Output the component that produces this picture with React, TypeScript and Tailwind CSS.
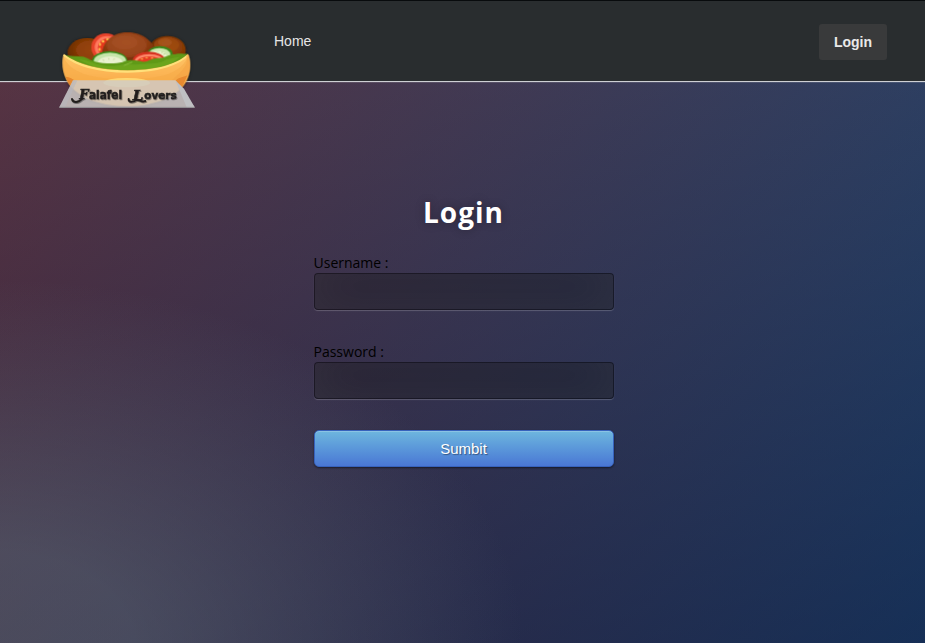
import React from 'react';

function Logo() {
  return (
    <svg className="block h-[95px] w-[155px]" viewBox="0 0 465 285" role="img" aria-label="Falafel Lovers">
      <defs>
        <linearGradient id="pita" x1="0" y1="0" x2="0" y2="1">
          <stop offset="0" stopColor="#ffc568" />
          <stop offset="0.5" stopColor="#fbb04e" />
          <stop offset="1" stopColor="#f09a38" />
        </linearGradient>
        <radialGradient id="ball" cx="0.45" cy="0.35" r="0.7">
          <stop offset="0" stopColor="#a34d22" />
          <stop offset="0.55" stopColor="#913d12" />
          <stop offset="1" stopColor="#6b2c06" />
        </radialGradient>
        <radialGradient id="sideBall" cx="0.6" cy="0.4" r="0.7">
          <stop offset="0" stopColor="#9c4a10" />
          <stop offset="0.5" stopColor="#863a06" />
          <stop offset="1" stopColor="#602800" />
        </radialGradient>
        <filter id="shade" x="-10%" y="-10%" width="120%" height="130%">
          <feDropShadow dx="0" dy="2" stdDeviation="4" floodColor="#000" floodOpacity="0.65" />
        </filter>
        <filter id="ink" x="-5%" y="-20%" width="110%" height="150%">
          <feDropShadow dx="2" dy="3" stdDeviation="2" floodColor="#000" floodOpacity="0.4" />
        </filter>
        <clipPath id="bowl">
          <path d="M41 102 C62 118 116 150 233 151 C340 150 387 126 414 102 C422 120 424 150 410 180 C390 225 320 257 232 258 C138 257 74 225 50 180 C35 150 36 122 41 102Z" />
        </clipPath>
      </defs>
      <g filter="url(#shade)">
        <ellipse cx="112" cy="98" rx="59" ry="44" fill="url(#sideBall)" />
        <ellipse cx="118" cy="90" rx="40" ry="28" fill="#93420e" opacity="0.65" />
        <ellipse cx="352" cy="91" rx="55" ry="43" fill="url(#sideBall)" />
        <ellipse cx="350" cy="74" rx="38" ry="22" fill="#a04b13" opacity="0.7" />
        <ellipse cx="345" cy="67" rx="21" ry="12" fill="#ab5a22" opacity="0.6" />
        <ellipse cx="168" cy="82" rx="44" ry="42" fill="#e9432c" />
        <ellipse cx="171" cy="82" rx="37" ry="34" fill="#ff7a5e" />
        <ellipse cx="176" cy="83" rx="32" ry="29" fill="#e4371f" />
        <g fill="#ffc94f">
          <ellipse cx="150" cy="73" rx="3" ry="5" /><ellipse cx="159" cy="64" rx="4" ry="4" />
          <ellipse cx="173" cy="58" rx="5" ry="3" /><ellipse cx="149" cy="88" rx="3" ry="5" />
        </g>
        <path d="M156 108 C154 68 187 37 232 37 C281 37 312 67 318 101 C300 129 171 130 156 108Z" fill="url(#ball)" />
        <ellipse cx="230" cy="76" rx="60" ry="36" fill="#a04c22" opacity="0.55" />
        <ellipse cx="224" cy="67" rx="39" ry="22" fill="#a85428" opacity="0.45" />
        <ellipse cx="330" cy="102" rx="38" ry="24" fill="#39891b" />
        <ellipse cx="328" cy="104" rx="33" ry="20" fill="#cfe8b0" />
        <ellipse cx="325" cy="107" rx="24" ry="14" fill="#eaf2cd" />
        <path d="M322 95 L326 99 M337 94 L336 99 M346 101 L340 103" stroke="#abc879" strokeWidth="2" />
        <ellipse cx="179" cy="123" rx="53" ry="30" fill="#368b18" />
        <ellipse cx="180" cy="124" rx="49" ry="26" fill="#c6e6aa" />
        <ellipse cx="181" cy="128" rx="37" ry="19" fill="#eaf2d0" />
        <path d="M158 119 L163 122 M176 114 L177 119 M194 115 L190 120" stroke="#b5cd83" strokeWidth="2" />
        <ellipse cx="297" cy="122" rx="49" ry="27" fill="#d5301f" />
        <ellipse cx="298" cy="124" rx="44" ry="22" fill="#ff8a6c" />
        <ellipse cx="298" cy="127" rx="38" ry="18" fill="#e53b23" />
        <g fill="#ffb045">
          <ellipse cx="276" cy="117" rx="4" ry="2" /><ellipse cx="290" cy="113" rx="4" ry="2" />
          <ellipse cx="306" cy="114" rx="4" ry="2" />
        </g>
        <path d="M44 105 C65 109 80 108 99 110 C118 116 132 128 158 129 C184 131 202 130 218 126 C235 118 256 120 276 125 C294 127 304 114 325 114 C345 115 350 103 377 102 C391 100 400 102 413 102 L378 146 L232 164 L104 151Z" fill="#5e9a18" />
        <path d="M84 118 C124 120 138 140 188 138 C215 136 229 129 256 134 C304 130 330 132 348 119 L391 110 L348 143 L244 157 L139 144Z" fill="#77ae25" opacity="0.6" />
        <path d="M222 136 L247 126" stroke="#a3cc55" strokeWidth="3" opacity="0.6" />
        <path d="M41 102 C62 118 116 150 233 151 C340 150 387 126 414 102 C422 120 424 150 410 180 C390 225 320 257 232 258 C138 257 74 225 50 180 C35 150 36 122 41 102Z" fill="url(#pita)" />
      </g>
      <g clipPath="url(#bowl)">
        <path d="M38 103 C54 160 128 178 231 178 C331 178 400 160 416 103 L430 210 L375 236 L240 264 L90 236 L32 171Z" fill="#f6a945" opacity="0.5" />
        <path d="M41 104 C80 138 151 154 233 155 C333 153 389 129 413 105" fill="none" stroke="#ffe07a" strokeWidth="7" />
        <path d="M405 101 C420 126 402 145 386 162 L367 179 L389 199 L421 164 L420 98Z" fill="#f3a144" opacity="0.5" />
        <path d="M47 170 C60 171 68 176 75 183 L62 206Z" fill="#dc711e" opacity="0.6" />
        <path d="M377 182 C386 172 398 172 412 166 L394 208Z" fill="#e07e26" opacity="0.7" />
        <ellipse cx="230" cy="188" rx="70" ry="14" fill="#ffe17c" opacity="0.8" />
      </g>
      <path d="M69 181 H376 L434 262 H28Z" fill="#cfcbc8" fillOpacity="0.83" />
      <path d="M69 181 L28 262 H45 L82 181Z" fill="#b8b8be" opacity="0.6" />
      <path d="M376 181 L402 206 L434 262 H410Z" fill="#c0c0c3" />
      <path d="M28 262 H434" stroke="#9a9a9d" strokeWidth="3" />
      <g fill="#211f1d" filter="url(#ink)" style={{ fontFamily: '"DejaVu Sans", sans-serif', fontWeight: 700 }}>
        <g stroke="#211f1d" strokeWidth="1.6">
          <text x="88" y="238" fontSize="38" fontStyle="italic" textLength="28" lengthAdjust="spacingAndGlyphs" style={{ fontFamily: '"DejaVu Serif", serif' }}>F</text>
          <text x="117" y="237" fontSize="35" textLength="99" lengthAdjust="spacingAndGlyphs">alafel</text>
          <text x="248" y="240" fontSize="40" fontStyle="italic" textLength="32" lengthAdjust="spacingAndGlyphs" style={{ fontFamily: '"DejaVu Serif", serif' }}>L</text>
          <text x="283" y="237" fontSize="34" textLength="97" lengthAdjust="spacingAndGlyphs">overs</text>
        </g>
        <path d="M66 237 C68 248 84 250 97 236 M236 237 C235 248 248 247 260 240 C269 238 273 248 286 243" fill="none" stroke="#211f1d" strokeWidth="6" strokeLinecap="round" />
      </g>
    </svg>
  );
}

function Field({ label, type }: { label: string; type: string }) {
  return (
    <label className="block text-[14px] leading-[19px] text-black">
      <span className="block">{label}</span>
      <input
        type={type}
        className="mt-px block h-[37px] w-full rounded-[4px] border border-black/30 bg-black/30 p-[10px] text-[13px] text-white shadow-[inset_0_-5px_45px_rgba(100,100,100,0.2),0_1px_1px_rgba(255,255,255,0.2)] outline-none"
      />
    </label>
  );
}

export default function App() {
  return (
    <div className="flex h-[643px] w-full flex-col overflow-hidden bg-[radial-gradient(ellipse_farthest-corner_at_0%_100%,rgba(104,128,138,0.4)_10%,rgba(138,114,76,0)_40%),linear-gradient(to_bottom,rgba(57,173,219,0.25)_0%,rgba(42,60,87,0.4)_100%),linear-gradient(135deg,#670d10_0%,#092756_100%)] font-['Open_Sans',sans-serif]">
      <header className="flex h-[82px] shrink-0 items-start border-t border-b border-t-[#080b0d] border-b-[#ced0d4] bg-[#292d2f] pl-[50px] font-['Liberation_Sans',Arial,sans-serif] text-[14px] shadow-[0_1px_0_rgba(255,255,255,0.12)]">
        <a href="#" className="relative z-10 mt-[19px] block shrink-0">
          <Logo />
        </a>
        <a href="#" className="mt-[30px] ml-[69px] leading-5 text-[#e6e6e6]">Home</a>
        <a href="#" className="mt-[23px] mr-[38px] ml-auto flex h-9 w-[68px] items-center justify-center rounded-[3px] bg-[#393a3b] font-bold text-[#e9e9e9]">Login</a>
      </header>
      <main className="mx-auto mt-[109px] w-[300px] translate-x-[1px]">
        <h1 className="text-center text-[28px] leading-[42px] font-bold tracking-[1px] text-white [text-shadow:0_0_10px_rgba(0,0,0,0.3)]">Login</h1>
        <form className="mt-5 flex flex-col" onSubmit={(e) => e.preventDefault()}>
          <Field label="Username :" type="text" />
          <div className="mt-8">
            <Field label="Password :" type="password" />
          </div>
          <button className="mt-[31px] h-[37px] w-full rounded-[5px] border border-[#3762bc] bg-linear-to-b from-[#6eb6de] to-[#4a77d4] pt-px font-['Liberation_Sans',Arial,sans-serif] text-[15px] text-white shadow-[inset_0_1px_0_rgba(255,255,255,0.2),0_1px_2px_rgba(0,0,0,0.5)] [text-shadow:1px_1px_1px_rgba(0,0,0,0.4)]">Sumbit</button>
        </form>
      </main>
    </div>
  );
}
